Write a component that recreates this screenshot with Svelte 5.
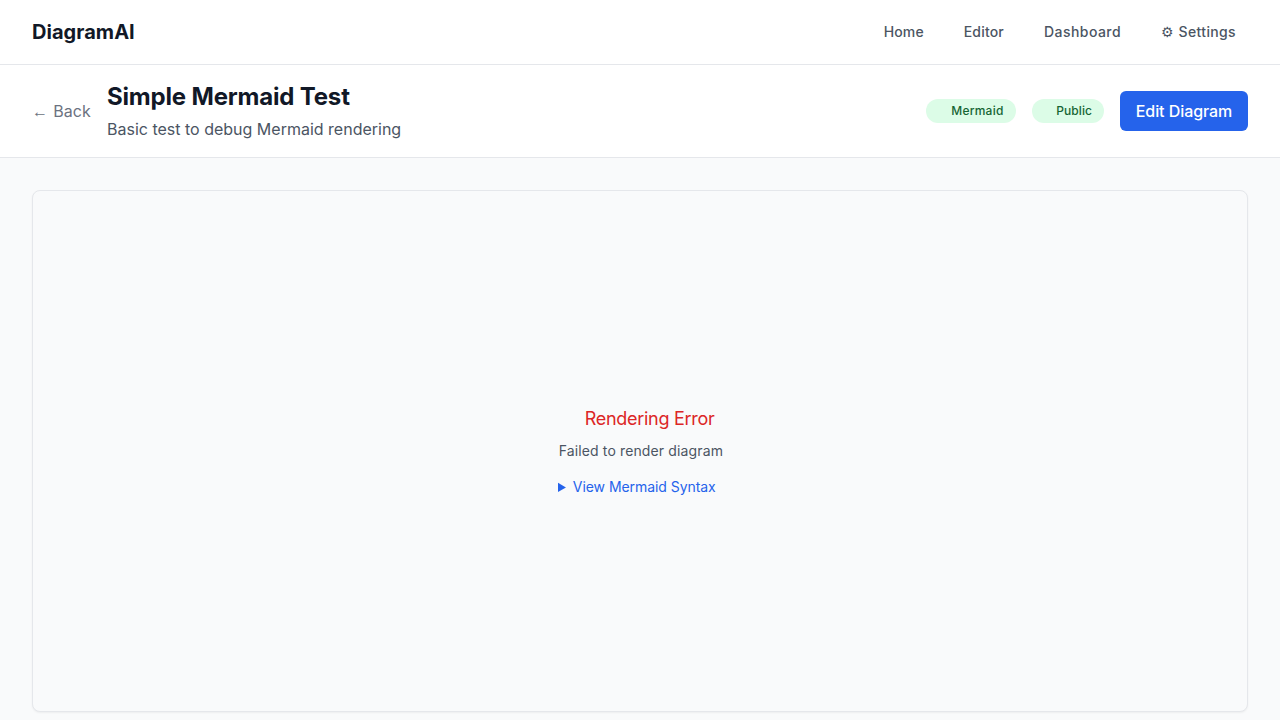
<script>
  const links = [
    { label: 'Home', spacing: 0.1 },
    { label: 'Editor', spacing: 0.18 },
    { label: 'Dashboard', spacing: 0.46 },
    { label: '⚙ Settings', spacing: 0.36 },
  ];
  const tags = [
    { label: 'Mermaid', spacing: 0.24 },
    { label: 'Public', spacing: 0.08 },
  ];
</script>

<div class="page">
  <nav>
    <a class="brand" href="#home">DiagramAI</a>
    <div class="links">
      {#each links as link}
        <a href="#nav" style:letter-spacing="{link.spacing}px">{link.label}</a>
      {/each}
    </div>
  </nav>
  <header>
    <div class="left">
      <a class="back" href="#back"><span class="arrow">←</span> Back</a>
      <div>
        <h1>Simple Mermaid Test</h1>
        <p>Basic test to debug Mermaid rendering</p>
      </div>
    </div>
    <div class="right">
      {#each tags as tag}
        <span class="tag" style:letter-spacing="{tag.spacing}px">{tag.label}</span>
      {/each}
      <button>Edit Diagram</button>
    </div>
  </header>
  <main>
    <section>
      <div class="error">
        <div class="title">Rendering Error</div>
        <div class="message">Failed to render diagram</div>
        <details>
          <summary>View Mermaid Syntax</summary>
        </details>
      </div>
    </section>
  </main>
</div>

<style>
  :global(body) { margin: 0; overflow: hidden; background: #f9fafb; }
  .page {
    height: 720px;
    box-sizing: border-box;
    overflow: hidden;
    font-family: Inter, sans-serif;
    font-size: 16px;
    line-height: 24px;
    color: #111827;
    background: #f9fafb;
  }
  a { text-decoration: none; white-space: nowrap; }
  nav, header {
    display: flex;
    align-items: center;
    justify-content: space-between;
    box-sizing: border-box;
    padding: 0 32px;
    background: #fff;
    border-bottom: 1px solid #e5e7eb;
  }
  nav { height: 65px; }
  .brand { font-size: 20px; line-height: 28px; font-weight: 700; color: #111827; letter-spacing: 0.04px; }
  .links { display: flex; gap: 16px; }
  .links a { padding: 8px 12px; font-size: 14px; line-height: 20px; font-weight: 500; color: #4b5563; }
  header { height: 93px; }
  .left, .right { display: flex; align-items: center; gap: 16px; }
  .back { width: 59px; color: #6b7280; word-spacing: 0.5px; letter-spacing: 0.1px; }
  .arrow { font-family: "Liberation Sans", sans-serif; line-height: 1; }
  h1 { margin: 0; font-size: 24px; line-height: 32px; font-weight: 700; letter-spacing: -0.18px; }
  p { margin: 4px 0 0; color: #4b5563; }
  .tag {
    padding: 4px 12px 4px 24px;
    border-radius: 12px;
    background: #dcfce7;
    color: #166534;
    font-size: 12px;
    line-height: 16px;
    font-weight: 500;
  }
  .tag:first-child { box-sizing: border-box; width: 90px; padding-left: 25px; }
  button {
    width: 128px;
    height: 40px;
    padding: 8px 0;
    border: 0;
    border-radius: 6px;
    background: #2563eb;
    color: #fff;
    font: 500 16px/24px Inter, sans-serif;
    letter-spacing: -0.06px;
  }
  main { padding: 32px; }
  section {
    display: flex;
    align-items: center;
    justify-content: center;
    box-sizing: border-box;
    height: 522px;
    border: 1px solid #e5e7eb;
    border-radius: 8px;
    background: #f9fafb;
    box-shadow: 0 1px 2px rgb(0 0 0 / 5%);
  }
  .error { width: 164px; text-align: left; white-space: nowrap; }
  .title { margin-bottom: 8px; padding-left: 26.7px; font-size: 18px; line-height: 28px; letter-spacing: -0.29px; color: #dc2626; }
  .message { padding-left: 0.7px; font-size: 14px; line-height: 20px; letter-spacing: 0.13px; color: #4b5563; }
  details { margin-top: 16px; font-size: 14px; line-height: 20px; letter-spacing: -0.06px; }
  summary { color: #2563eb; cursor: pointer; }
</style>
